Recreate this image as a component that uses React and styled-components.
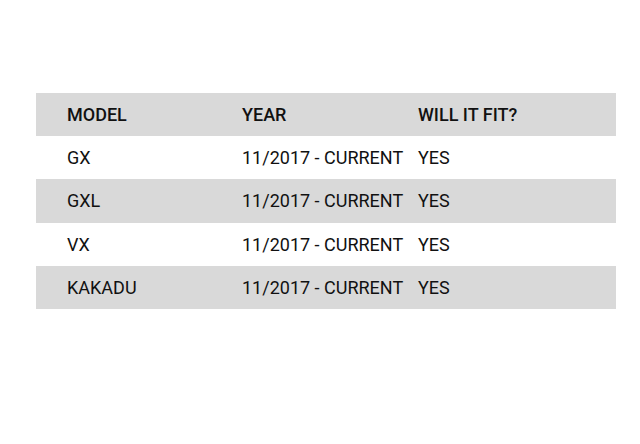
import React from 'react';
import styled, { createGlobalStyle } from 'styled-components';

const GlobalStyle = createGlobalStyle`
  body {
    margin: 0;
    background: #fff;
    font-family: Roboto, 'Liberation Sans', sans-serif;
  }
`;

const Page = styled.div`
  padding: 93px 24px 0 36px;
`;

const Table = styled.div`
  width: 580px;
  display: flex;
  flex-direction: column;
`;

const Row = styled.div`
  display: grid;
  grid-template-columns: 175px 176px 1fr;
  align-items: center;
  height: 43.2px;
  padding-left: 31px;
  background: ${(p) => (p.shaded ? '#d9d9d9' : '#fff')};
  color: #111;
  font-size: 18px;
  font-weight: ${(p) => (p.head ? 500 : 400)};
`;

const Cell = styled.div`
  white-space: nowrap;
`;

const rows = [
  ['GX', '11/2017 - CURRENT', 'YES'],
  ['GXL', '11/2017 - CURRENT', 'YES'],
  ['VX', '11/2017 - CURRENT', 'YES'],
  ['KAKADU', '11/2017 - CURRENT', 'YES'],
];

export default function App() {
  return (
    <>
      <GlobalStyle />
      <Page>
        <Table>
          <Row head shaded>
            <Cell>MODEL</Cell>
            <Cell>YEAR</Cell>
            <Cell>WILL IT FIT?</Cell>
          </Row>
          {rows.map((r, i) => (
            <Row key={r[0]} shaded={i % 2 === 1}>
              {r.map((c, j) => (
                <Cell key={j}>{c}</Cell>
              ))}
            </Row>
          ))}
        </Table>
      </Page>
    </>
  );
}
